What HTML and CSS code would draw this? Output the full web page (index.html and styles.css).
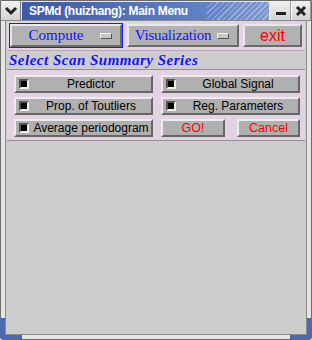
FILE: index.html
```html
<!DOCTYPE html>
<html>
<head>
<meta charset="utf-8">
<link rel="stylesheet" href="styles.css">
</head>
<body>
<div class="window">
  <div class="titlebar">
    <div class="tb-btn">
      <svg width="14" height="10" viewBox="0 0 14 10"><path d="M2 2 L7 7 L12 2" fill="none" stroke="#222" stroke-width="3"/></svg>
    </div>
    <div class="title"><span>SPMd (huizhang): Main Menu</span><div class="stripes"></div></div>
    <div class="tb-btn">
      <svg width="12" height="12" viewBox="0 0 12 12"><rect x="1" y="7" width="10" height="3" fill="#222"/></svg>
    </div>
    <div class="tb-btn">
      <svg width="12" height="12" viewBox="0 0 12 12"><path d="M2 2 L10 10 M10 2 L2 10" stroke="#222" stroke-width="3"/></svg>
    </div>
  </div>
  <div class="body">
    <div class="toolbar">
      <div class="focus"><div class="mbtn serif blue">Compute<span class="ind"></span></div></div>
      <div class="mbtn serif blue wide">Visualization<span class="ind"></span></div>
      <div class="mbtn sans red exit">exit</div>
    </div>
    <div class="heading">Select Scan Summary Series</div>
    <div class="panel">
      <div class="row">
        <div class="btn chk"><span class="box"></span><span class="lbl">Predictor</span></div>
        <div class="btn chk"><span class="box"></span><span class="lbl">Global Signal</span></div>
      </div>
      <div class="row">
        <div class="btn chk"><span class="box"></span><span class="lbl">Prop. of Toutliers</span></div>
        <div class="btn chk"><span class="box"></span><span class="lbl">Reg. Parameters</span></div>
      </div>
      <div class="row">
        <div class="btn chk"><span class="box"></span><span class="lbl">Average periodogram</span></div>
        <div class="pair">
          <div class="btn red go">GO!</div>
          <div class="btn red cancel">Cancel</div>
        </div>
      </div>
    </div>
    <div class="empty"></div>
  </div>
  <div class="corner bl"></div>
  <div class="corner br"></div>
</div>
</body>
</html>
```
FILE: styles.css
```css
html, body { margin: 0; padding: 0; }
body { width: 312px; height: 340px; overflow: hidden; background: #fff; }
.window {
  position: relative;
  width: 312px; height: 340px; box-sizing: border-box;
  background: #cdcdcd;
  display: flex; flex-direction: column;
  border: 1px solid #6a6a6a;
  border-radius: 0 0 4px 4px;
}
.titlebar { display: flex; height: 19px; background: #e6e6e6; border-bottom: 1px solid #8a8a8a; }
.tb-btn {
  width: 20px; display: flex; align-items: center; justify-content: center;
  background: linear-gradient(#f2f2f2, #d2d2d2);
  border-right: 1px solid #9a9a9a; box-sizing: border-box;
}
.tb-btn + .tb-btn { border-left: 1px solid #fff; }
.titlebar .tb-btn:first-child { border-right: 1px solid #7a7a7a; }
.title {
  flex: 1; position: relative; display: flex; align-items: center;
  background: linear-gradient(90deg, #3d5aa6, #5f7fc4 70%, #7d98d2);
  color: #fff; font: bold 12px "Liberation Sans", sans-serif; padding-left: 7px;
  letter-spacing: -0.3px;
  margin: 1px 2px 0 1px;
}
.stripes {
  position: absolute; right: 0; top: 0; bottom: 0; width: 62px;
  background: repeating-linear-gradient(-45deg, rgba(255,255,255,0.35) 0 1px, transparent 1px 4px);
}
.body {
  flex: 1; display: flex; flex-direction: column;
  border-left: 4px solid #e4e4e4; border-right: 4px solid #e4e4e4; border-bottom: 4px solid #e4e4e4;
  box-shadow: inset 1px 0 #8a8a8a, inset -1px 0 #8a8a8a, inset 0 -1px #8a8a8a;
  padding: 0 1px 1px 1px;
}
.toolbar {
  display: flex; gap: 4px; padding: 2px 2px 2px 2px;
  background: #e2d3e2; margin: 0 1px 0 1px;
  border-bottom: 1px solid #b8a8b8;
}
.focus { border: 1px solid #1a1aff; padding: 0; width: 114px; height: 25px; box-sizing: border-box; display: flex; }
.mbtn {
  position: relative; height: 24px; box-sizing: border-box;
  background: #b2b2b2;
  border: 2px solid; border-color: #e8e8e8 #6a6a6a #6a6a6a #e8e8e8;
  display: flex; align-items: center; justify-content: center;
  font-size: 15px;
}
.focus .mbtn { flex: 1; height: 23px; padding-right: 20px; }
.wide { width: 112px; padding-right: 20px; margin-top: 1px; height: 23px; letter-spacing: -0.2px; }
.exit { width: 59px; margin-top: 1px; height: 23px; font-size: 16px; }
.ind {
  position: absolute; right: 8px; top: 7px; width: 10px; height: 4px;
  background: #c8c8c8; border: 1px solid; border-color: #f4f4f4 #555 #555 #f4f4f4;
}
.serif { font-family: "Liberation Serif", serif; }
.sans { font-family: "Liberation Sans", sans-serif; }
.blue { color: #1010ff; }
.red { color: #ff0000; }
.heading {
  font: italic bold 15px "Liberation Serif", serif; color: #1212ff;
  padding: 1px 0 0 3px; height: 17px; letter-spacing: 0.5px;
}
.panel {
  background: #e2d3e2; margin: 0 1px;
  border-top: 1px solid #9a8a9a; border-bottom: 1px solid #9a8a9a;
  padding: 5px 5px 3px 7px;
  display: flex; flex-direction: column; gap: 4px;
}
.row { display: flex; gap: 8px; }
.row > * { flex: 0 0 139px; }
.btn {
  height: 18px; box-sizing: border-box; background: #b0b0b0;
  border: 2px solid; border-color: #ececec #666 #666 #ececec;
  display: flex; align-items: center; justify-content: center;
  font: 12px "Liberation Sans", sans-serif; color: #000;
}
.chk { position: relative; }
.chk .lbl { padding-left: 15px; }
.box {
  position: absolute; left: 3px; top: 2px; width: 10px; height: 10px; box-sizing: border-box;
  background: #000; border: 2px solid; border-color: #555 #f0f0f0 #f0f0f0 #555;
}
.pair { display: flex; justify-content: space-between; }
.btn.red { color: #ff0000; font-size: 12.5px; }
.go { width: 64px; }
.cancel { width: 63px; }
.empty { flex: 1; }
.corner { position: absolute; bottom: -1px; width: 22px; height: 22px; box-sizing: border-box; border-bottom: 5px solid #4d69b0; }
.corner.bl { left: -1px; border-left: 5px solid #4d69b0; border-bottom-left-radius: 4px; }
.corner.br { right: -1px; border-right: 5px solid #4d69b0; border-bottom-right-radius: 4px; }
```
